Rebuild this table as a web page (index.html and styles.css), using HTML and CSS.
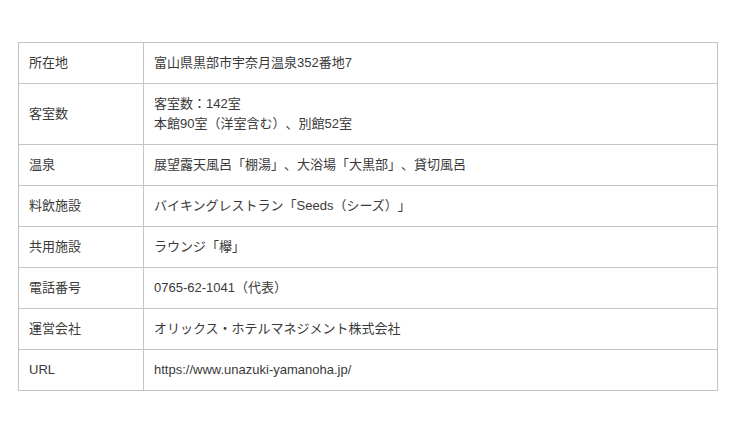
FILE: index.html
```html
<!DOCTYPE html>
<html lang="ja">
<head>
<meta charset="utf-8">
<title>施設概要</title>
<link rel="stylesheet" href="styles.css">
</head>
<body>
<div class="page">
  <table class="info">
    <tbody>
      <tr><th>所在地</th><td>富山県黒部市宇奈月温泉352番地7</td></tr>
      <tr><th>客室数</th><td>客室数：142室<br>本館90室（洋室含む）、別館52室</td></tr>
      <tr><th>温泉</th><td>展望露天風呂「棚湯」、大浴場「大黒部」、貸切風呂</td></tr>
      <tr><th>料飲施設</th><td>バイキングレストラン「Seeds（シーズ）」</td></tr>
      <tr><th>共用施設</th><td>ラウンジ「欅」</td></tr>
      <tr><th>電話番号</th><td>0765-62-1041（代表）</td></tr>
      <tr><th>運営会社</th><td>オリックス・ホテルマネジメント株式会社</td></tr>
      <tr><th>URL</th><td>https://www.unazuki-yamanoha.jp/</td></tr>
    </tbody>
  </table>
</div>
</body>
</html>
```
FILE: styles.css
```css
html, body {
  margin: 0;
  padding: 0;
  background: #fff;
}
.page {
  padding: 42px 0 0 18px;
}
.info {
  width: 700px;
  border-collapse: collapse;
  font-family: "Liberation Sans", "Noto Sans CJK JP", sans-serif;
  font-size: 13px;
  line-height: 20px;
  color: #3a3a3a;
  text-spacing-trim: space-all;
}
.info th,
.info td {
  border: 1px solid #c4c4c4;
  padding: 10px 10px;
  text-align: left;
  font-weight: normal;
  vertical-align: middle;
}
.info th {
  width: 104px;
}
```
